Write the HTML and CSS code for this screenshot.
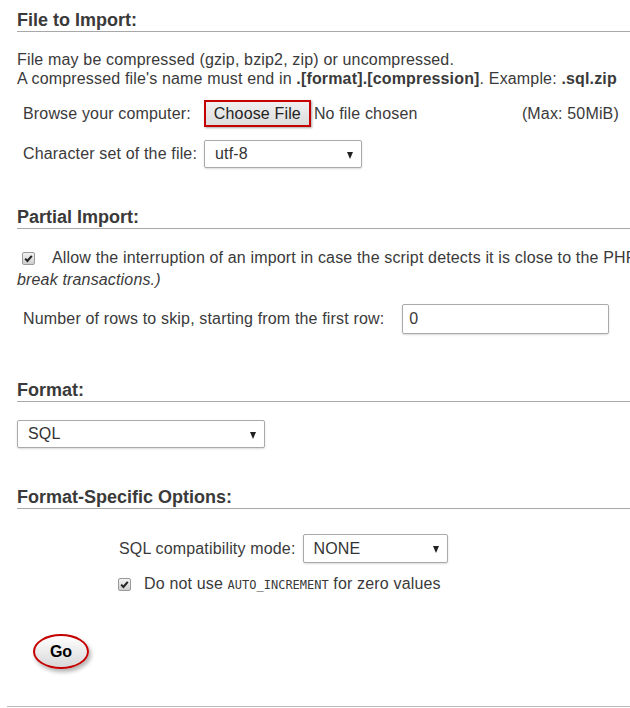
FILE: index.html
```html
<!DOCTYPE html>
<html lang="en">
<head>
  <meta charset="UTF-8">
  <title>Import</title>
  <link rel="stylesheet" href="styles.css">
</head>
<body>
  <main class="page">
    <section class="section">
      <h2 class="heading">File to Import:</h2>
      <p class="note">
        File may be compressed (gzip, bzip2, zip) or uncompressed.<br>
        A compressed file's name must end in <b>.[format].[compression]</b>. Example: <b>.sql.zip</b>
      </p>
      <div class="row browse">
        <label class="label">Browse your computer:</label>
        <span class="file-input">
          <button class="file-btn" type="button">Choose File</button>
          <span class="file-name">No file chosen</span>
        </span>
        <span class="max-size">(Max: 50MiB)</span>
      </div>
      <div class="row charset">
        <label class="label">Character set of the file:</label>
        <span class="select charset-select">
          <span class="select-value">utf-8</span>
          <span class="select-arrow"></span>
        </span>
      </div>
    </section>

    <section class="section">
      <h2 class="heading">Partial Import:</h2>
      <p class="check-para">
        <span class="checkbox"><svg viewBox="0 0 13 13" width="13" height="13"><path d="M3.2 6.6 L5.4 9 L9.8 3.8" fill="none" stroke="#222" stroke-width="2"/></svg></span>Allow the interruption of an import in case the script detects it is close to the PHP timeout limit. <i>(This might be a good way to import large files, however it can<br>break transactions.)</i>
      </p>
      <div class="row skip">
        <label class="label">Number of rows to skip, starting from the first row:</label>
        <span class="text-input">0</span>
      </div>
    </section>

    <section class="section format">
      <h2 class="heading">Format:</h2>
      <div class="format-row">
        <span class="select format-select">
          <span class="select-value">SQL</span>
          <span class="select-arrow"></span>
        </span>
      </div>
    </section>

    <section class="section">
      <h2 class="heading">Format-Specific Options:</h2>
      <div class="options">
        <div class="row compat">
          <label class="label-plain">SQL compatibility mode:</label>
          <span class="select compat-select">
            <span class="select-value">NONE</span>
            <span class="select-arrow"></span>
          </span>
        </div>
        <div class="check-row">
          <span class="checkbox"><svg viewBox="0 0 13 13" width="13" height="13"><path d="M3.2 6.6 L5.4 9 L9.8 3.8" fill="none" stroke="#222" stroke-width="2"/></svg></span>Do not use <code>AUTO_INCREMENT</code> for zero values
        </div>
      </div>
    </section>

    <div class="footer-bar">
      <button class="go-btn" type="button">Go</button>
    </div>
    <div class="bottom-rule"></div>
  </main>
</body>
</html>
```

FILE: styles.css
```css
* {
  margin: 0;
  padding: 0;
  box-sizing: border-box;
}

html, body {
  overflow: hidden;
}

body {
  font-family: 'Liberation Sans', Arial, sans-serif;
  font-size: 16px;
  letter-spacing: 0.16px;
  color: #3a3a3a;
  background: #fff;
}

.page {
  width: 1200px;
  padding-left: 7px;
}

.section {
  padding-left: 10px;
}

.heading {
  font-size: 18px;
  line-height: 22px;
  font-weight: bold;
  letter-spacing: 0;
  color: #3a3a3a;
  border-bottom: 1px solid #a8a8a8;
  margin-top: 38px;
}

.section:first-child .heading {
  margin-top: 9px;
}

.format .heading {
  margin-top: 45px;
}

.note {
  margin-top: 18px;
  line-height: 19px;
}

.row {
  display: flex;
  align-items: center;
}

.label {
  padding-left: 6px;
}

/* file row */
.browse {
  margin-top: 11px;
  height: 29px;
}

.browse .label {
  margin-right: 13px;
}

.file-input {
  display: flex;
  align-items: center;
  width: 318px;
}

.file-btn {
  height: 27px;
  width: 107px;
  font-family: inherit;
  font-size: 16px;
  letter-spacing: inherit;
  color: #222;
  border: 2px solid #c40000;
  background: linear-gradient(#f0f0f0, #dcdcdc);
  box-shadow: 1px 1px 2px rgba(0, 0, 0, 0.35);
  margin-right: 3px;
}

/* selects */
.select {
  position: relative;
  display: flex;
  align-items: center;
  height: 28px;
  padding-left: 10px;
  border: 1px solid #aaa;
  border-radius: 2px;
  background: #fff;
  box-shadow: 0 1px 2px rgba(0, 0, 0, 0.15);
  color: #333;
}

.select-arrow {
  position: absolute;
  right: 8px;
  top: 11px;
  border-left: 3.5px solid transparent;
  border-right: 3.5px solid transparent;
  border-top: 7px solid #222;
}

.charset {
  margin-top: 12px;
}

.charset .label {
  margin-right: 7px;
}

.charset-select {
  width: 158px;
}

/* partial import */
.check-para {
  margin-top: 18px;
  line-height: 22px;
}

.checkbox {
  display: inline-block;
  vertical-align: -2px;
  width: 13px;
  height: 13px;
  border: 1px solid #9a9a9a;
  border-radius: 2px;
  background: linear-gradient(#f2f2f2, #cfcfcf);
  margin-left: 5px;
  margin-right: 17px;
  overflow: hidden;
}

.checkbox svg {
  display: block;
  margin: -1px 0 0 -1px;
}

.skip {
  margin-top: 13px;
}

.skip .label {
  margin-right: 18px;
}

.text-input {
  display: flex;
  align-items: center;
  width: 207px;
  height: 30px;
  padding-left: 6px;
  border: 1px solid #aaa;
  border-radius: 2px;
  box-shadow: 0 1px 2px rgba(0, 0, 0, 0.15);
}

/* format */
.format-row {
  margin-top: 18px;
}

.format-select {
  width: 248px;
}

/* format-specific */
.options {
  padding-left: 101px;
}

.compat {
  margin-top: 25px;
}

.label-plain {
  padding-left: 1px;
  margin-right: 7px;
}

.compat-select {
  width: 145px;
  height: 29px;
}

.check-row {
  margin-top: 10px;
  line-height: 22px;
}

.check-row .checkbox {
  margin-left: 0;
  margin-right: 13px;
}

code {
  font-family: 'DejaVu Sans Mono', monospace;
  font-size: 12px;
  letter-spacing: 0;
}

/* footer */
.footer-bar {
  padding-left: 26px;
  margin-top: 38px;
}

.go-btn {
  width: 56px;
  height: 35px;
  border-radius: 50%;
  border: 2px solid #c40000;
  background: linear-gradient(#ffffff, #d8d8d8);
  box-shadow: 2px 3px 4px rgba(0, 0, 0, 0.3);
  font-family: inherit;
  font-size: 16px;
  font-weight: bold;
  color: #000;
}

.bottom-rule {
  margin-top: 37px;
  border-top: 1px solid #bbb;
}
```
